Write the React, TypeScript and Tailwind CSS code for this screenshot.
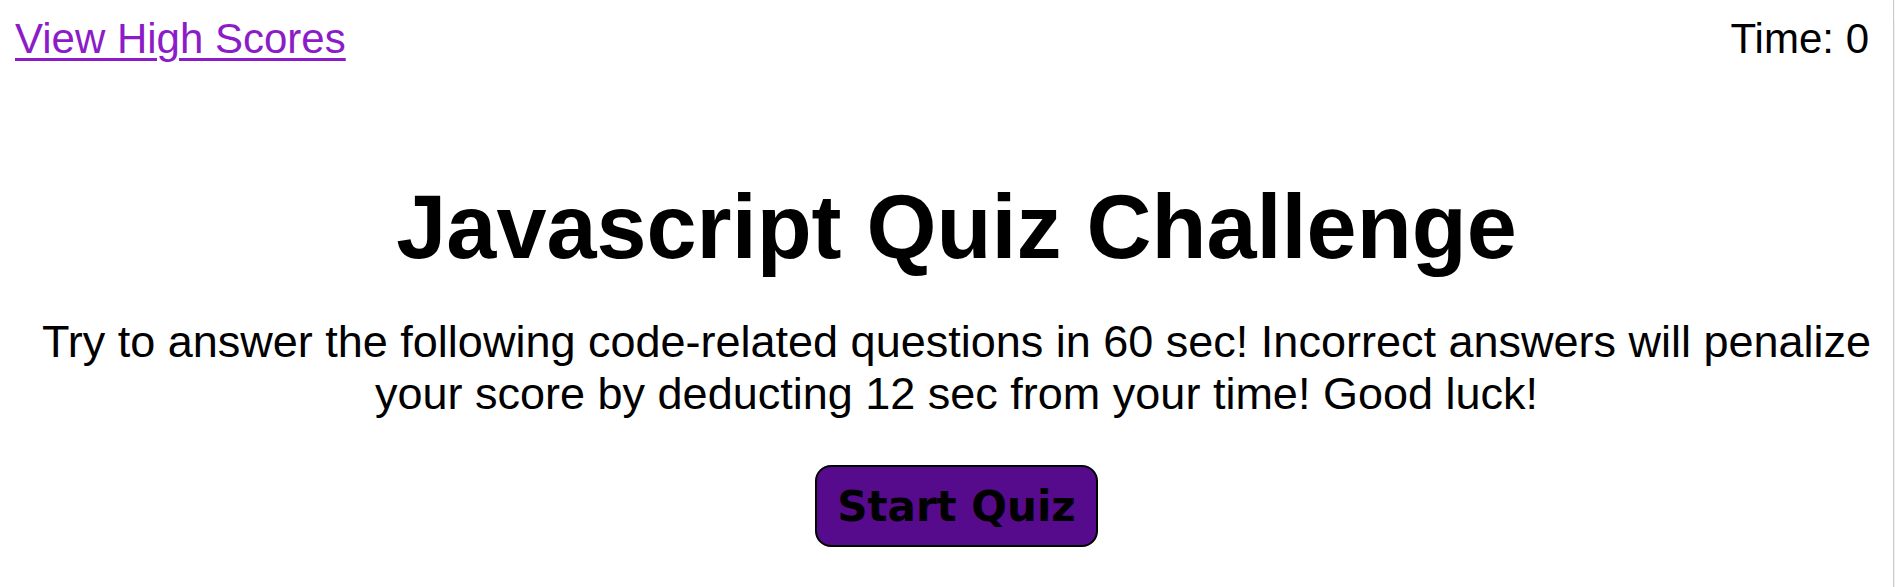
import React, { useState } from 'react';

const QUIZ_TIME = 60;
const PENALTY = 12;

export default function App() {
  const [time] = useState(0);

  return (
    <div className="flex h-screen w-full bg-white font-['Liberation_Sans',Arial,sans-serif] text-black">
      <div className="flex min-w-0 flex-1 flex-col">
        {/* Top bar */}
        <header className="flex items-start justify-between pl-[15px] pr-[24px] pt-[15px] text-[42px] leading-[1.15]">
          <a href="#" className="text-[#8b1cc8] underline decoration-[3px] underline-offset-[5px]">
            View High Scores
          </a>
          <span>Time: {time}</span>
        </header>

        {/* Intro card */}
        <main className="flex flex-col items-center pl-[20px] text-center">
          <h1 className="mt-[113px] text-[90px] font-bold leading-[1.15]">Javascript Quiz Challenge</h1>
          <p className="mt-[36px] text-[45px] leading-[1.15]">
            Try to answer the following code-related questions in {QUIZ_TIME} sec! Incorrect answers will penalize
            your score by deducting {PENALTY} sec from your time! Good luck!
          </p>
          <button
            type="button"
            className="mt-[46px] flex h-[82px] w-[283px] items-center justify-center rounded-[16px] border-2 border-black bg-[#560a8c] font-['Comic_Sans_MS','DejaVu_Sans',sans-serif] text-[42px] font-bold text-black"
          >
            Start Quiz
          </button>
        </main>
      </div>

      {/* Scrollbar edge */}
      <div className="flex w-[2px] flex-col border-l border-[#c9c9c9] bg-[#f1f1f1]">
        <div className="h-[20px] bg-[#f8f8f8]"></div>
      </div>
    </div>
  );
}
